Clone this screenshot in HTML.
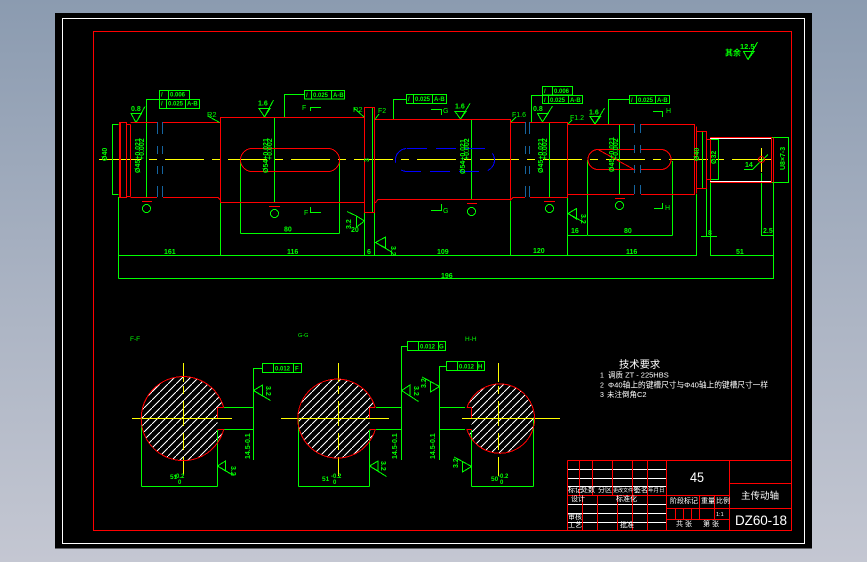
<!DOCTYPE html>
<html><head><meta charset="utf-8"><style>
html,body{margin:0;padding:0;width:867px;height:562px;overflow:hidden;background:linear-gradient(180deg,#8b9bb0 0%,#a9b2c2 50%,#c4c7d2 100%)}
svg{position:absolute;left:0;top:0}
text{font-family:"Liberation Sans","Noto Sans CJK SC",sans-serif}
.g text,text.g{fill:#00ff00;font-size:7px;font-weight:bold}
.w text{fill:#fff;font-size:7px}
</style></head><body>
<svg width="867" height="562" viewBox="0 0 867 562">
<defs>
<pattern id="h" patternUnits="userSpaceOnUse" width="8" height="8"><path d="M0 8L8 0" stroke="#fff" stroke-width="1.2" fill="none" shape-rendering="crispEdges"/></pattern>
</defs>
<rect x="55" y="13" width="757" height="535.5" fill="#000"/>
<rect x="62.5" y="18.5" width="742" height="525" fill="none" stroke="#fff"/>
<rect x="93.5" y="31.5" width="698" height="499" fill="none" stroke="#f00"/>

<!-- hatching -->
<g>
<path d="M223.7 407.5A42 42 0 1 0 223.7 429.7L217.5 429.7L217.5 407.5Z" fill="url(#h)"/>
<path d="M375.2 407.5A39.5 39.5 0 1 0 375.2 429.7L369.5 429.7L369.5 407.5Z" fill="url(#h)"/>
<path d="M467 407.5A34.7 34.7 0 1 1 467 429.7L471.5 429.7L471.5 407.5Z" fill="url(#h)"/>
</g>

<g shape-rendering="crispEdges" fill="none" stroke-width="1">
<!-- yellow centre lines -->
<g stroke="#ff0">
<path d="M99 159.5H141" />
<path d="M149 159.5H778" stroke-dasharray="8 8 39 8"/>
<path d="M183.5 363V382M183.5 386V394M183.5 401V426M183.5 433V450M183.5 457V475M132 418.5H232"/>
<path d="M338.5 363V382M338.5 386V394M338.5 401V426M338.5 433V450M338.5 457V476M281 418.5H389" />
<path d="M498.5 363V382M498.5 386V394M498.5 401V426M498.5 433V450M498.5 457V476M462 418.5H560"/>
<path d="M761.5 148V172"/>
</g>
<!-- green dimension lines -->
<g stroke="#00ff00">
<path d="M118.5 124.5H112.5V194.5H118.5"/>
<path d="M146.5 197V99.5H159.5"/>
<path d="M159.5 99V90.5H189.5V99M159.5 99.5H199.5V108.5H159.5ZM168.5 90.5V99M166.5 99.5V108.5M185.5 99.5V108.5"/>
<path d="M131 113.5H141.5L136 122.5ZM136 122.5L145 106.5"/>
<path d="M259 108.5H270L264.5 117ZM264.5 117L273.5 100"/>
<path d="M274.5 117V202"/>
<path d="M284.5 117V94.5H304.5M304.5 90.5H344.5V99H304.5ZM311.5 90.5V99M331.5 90.5V99"/>
<path d="M310.5 111V107.5H321M310.5 207V212.5H321"/>
<path d="M240.5 160V233.5M339.5 160V233.5M240.5 233.5H339.5"/>
<path d="M220.5 202V255.5M118.5 197V278.5M118.5 255.5H696.5M118.5 278.5H773.5"/>
<path d="M364.5 160V255.5M374.5 212V255.5M372.5 108V212"/>
<path d="M356.5 216V227L364.5 221ZM356.5 216L347 211.5"/>
<path d="M375.5 242.5L385.5 237V248ZM375.5 242.5L392.5 252.5"/>
<!-- middle -->
<path d="M406.5 94.5H446.5V103.5H406.5ZM413.5 94.5V103.5M432.5 94.5V103.5M393.5 119V99.5H406.5"/>
<path d="M431 109.5H441.5V115M431 210.5H441.5V204"/>
<path d="M455 111.5H466L460.5 119ZM460.5 119L470 103.5"/>
<path d="M471.5 119V199"/>
<path d="M510.5 201V255.5"/>
<path d="M542.5 86.5H572.5V95H542.5ZM552.5 86.5V95M542.5 95.5H582.5V103.5H542.5ZM548.5 95V103.5M568.5 95V103.5M531.5 122V95.5H542.5"/>
<path d="M537.5 113.5H548L542.5 122ZM542.5 122L552.5 106"/>
<path d="M549.5 122V197"/>
<path d="M568 213.5L576.5 208.5V219ZM568 213.5L584 222.5"/>
<path d="M567.5 197V255.5M567.5 235.5H587"/>
<path d="M629.5 95.5H669.5V103.5H629.5ZM636.5 95.5V103.5M655.5 95.5V103.5M608.5 124V99.5H629.5"/>
<path d="M590 116.5H600.5L595 124ZM595 124L604.5 108"/>
<path d="M653 111.5H662.5V117M654 208.5H662.5V203"/>
<path d="M619.5 124V194"/>
<path d="M587.5 160V235.5M672.5 161V235.5M587.5 235.5H672.5"/>
<path d="M696.5 194V256M710.5 182V256M710.5 255.5H773.5M773.5 182V279"/>
<path d="M706.5 188V236M701 236.5H717"/>
<path d="M702.5 131V188"/>
<path d="M710 139.5H718.5V179.5H710"/>
<path d="M771 137.5H788.5V182.5H772"/>
<path d="M768 154.5L752.5 169.5H744"/>
<path d="M761.5 173V236M761.5 235.5H773"/>
<path d="M743.5 51.5H754L748 59.5ZM748 59.5L757.5 42"/>
<!-- sections -->
<path d="M224 407.5H253.5M224 429.5H253.5M253.5 460V368.5H262.5M262.5 363.5H301.5V372.5H262.5ZM273.5 363.5V372.5M293.5 363.5V372.5"/>
<path d="M141.5 418V486.5M217.5 430V486.5M141.5 486.5H217.5"/>
<path d="M217.5 466L225.5 461V471ZM217.5 466L233.5 475.5"/>
<path d="M253.5 390.5L262.5 385V396ZM253.5 390.5L270.5 400.5"/>
<path d="M376 407.5H401.5M376 429.5H401.5M401.5 460V346.5H407.5M407.5 341.5H445.5V350.5H407.5ZM418.5 341.5V350.5M438.5 341.5V350.5"/>
<path d="M298.5 418V486.5M369.5 430V486.5M298.5 486.5H369.5"/>
<path d="M369.5 466L378 461V471ZM369.5 466L386.5 476.5"/>
<path d="M401.5 390.5L410 385V396ZM401.5 390.5L418.5 401.5"/>
<path d="M439.5 407.5H465M439.5 429.5H465M439.5 460V366.5H446.5M446.5 361.5H484.5V370.5H446.5ZM457.5 361.5V370.5M477.5 361.5V370.5"/>
<path d="M430.5 381.5L439.5 386.5L430.5 392ZM430.5 381.5L422 377"/>
<path d="M471.5 430V486.5M533.5 419V486.5M471.5 486.5H533.5"/>
<path d="M462.5 461.5L471.5 466.5L462.5 472ZM462.5 461.5L454 457"/>
</g>
<!-- circle markers -->
<g stroke="#00ff00">
<circle cx="146.5" cy="208.500" r="4"/><circle cx="274.5" cy="213.5" r="4"/><circle cx="471.5" cy="211.5" r="4"/><circle cx="549.5" cy="208.5" r="4"/><circle cx="619.5" cy="205.5" r="4"/>
</g>
<path stroke="#f00" d="M142 201.5H152M269 206.5H280M467 203.5H477M544 201.5H555M615 198.5H625"/>
<!-- blue breaks -->
<g stroke="#1565a0">
<path d="M157.5 122V134M157.5 146V154M157.5 166V174M157.5 186V197M162.5 122V134M162.5 146V154M162.5 166V174M162.5 186V197"/>
<path d="M525.5 122V134M525.5 146V154M525.5 166V174M525.5 186V197M529.5 122V134M529.5 146V154M529.5 166V174M529.5 186V197"/>
<path d="M634.5 124V133M634.5 145V153M634.5 165V173M634.5 185V194M640.5 124V133M640.5 145V153M640.5 165V173M640.5 185V194"/>
</g>
<!-- red outline -->
<g stroke="#f00">
<path d="M119.5 197.5V122.5H126.500V197.5ZM120.5 122.5V197.5M130.5 124.5V196.5M126.5 124.5H130.5M126.5 196.5H130.5"/>
<path d="M130.5 122.5H157M163 122.5H220M130.5 197.5H157M163 197.5H218L220.5 200"/>
<path d="M220.5 117.5H364.5V202.5H220.5Z"/>
<path d="M364.5 107.5H374.5V212.5H364.5Z"/>
<path d="M375 119.5H510.5V199.5H378L375 203"/>
<path d="M510.5 122.5H525M530 122.5H567.5V197.5H530M525 197.5H513L510.5 200V122"/>
<path d="M567.5 124.5H634M641 124.5H694.5V194.5H641M634 194.5H567.5"/>
<path d="M694.5 124.5V194.5M696.5 126.5V193.5M696.5 131.5H706.5V188.5H696.5"/>
<path d="M707 139.5H710.5V179.5H707M710.5 137.5V182.5"/>
<path d="M710.5 137.5H771.5V182.5H710.5M773.5 137.5V182.5"/>
<rect x="240.5" y="148.5" width="99" height="23" rx="11.5"/>
<path d="M598 149.5H634M641 149.5H661A10 10 0 0 1 661 169.5H641M634 169.5H598A10 10 0 0 1 598 149.5Z"/>
<circle cx="761.5" cy="159.5" r="3"/>
<path d="M223.7 407.5A42 42 0 1 0 223.7 429.7L217.5 429.7M217.5 407.5H223.7"/>
<path d="M217.5 407.5V418"/>
<path d="M375.2 407.5A39.5 39.5 0 1 0 375.2 429.7L369.5 429.7M369.5 407.5H375.2M369.5 407.5V418"/>
<path d="M467 407.5A34.7 34.7 0 1 1 467 429.7L471.5 429.7M471.5 407.5H467M471.5 407.5V418"/>
</g>
<rect x="395.5" y="148.5" width="99" height="23" rx="11.5" stroke="#0000ff" stroke-dasharray="20 9"/>
<path stroke="#fff" d="M710 138.5H771M710 181.5H771"/>
<!-- leaders -->
<path stroke="#00ff00" d="M208 116L219.5 122.5M354 108L364 117M375 119.5L379 114M511 122L516 117M568 124L572 120"/>
<!-- title block -->
<path stroke="#fff" d="M567.5 469.5H666M567.5 478.5H666M567.5 486.5H666M567.5 504.5H666M567.5 513.5H666M567.5 522.5H666"/>
<path stroke="#f00" d="M567.5 460.5H791.5M567.5 460.5V530M567.5 495.5H729.5M579.5 460.5V495M592.5 460.5V495M612.5 460.5V495M632.5 460.5V530M647.5 460.5V530M666.5 460.5V530M582.5 495V530M597.5 495V530M617.5 495V530M729.5 460.5V530M729.5 483.5H791.5M666.5 508.5H791.5M666.5 519.5H729.5M699.5 495V519M714.5 495V519M675.5 508.5V519M683.5 508.5V519M691.5 508.5V519"/>
</g>

<!-- green text -->
<g class="g">
<text x="131" y="111">0.8</text>
<text x="258" y="105.500">1.6</text>
<text x="455" y="108.500">1.6</text>
<text x="533" y="111">0.8</text>
<text x="589" y="114.500">1.6</text>
<text x="740" y="49" style="font-size:7.500px">12.5</text>
<text x="725" y="55.500" style="font-size:8px">其余</text>
<text x="207" y="117" style="font-size:7.500px;font-weight:normal">R2</text>
<text x="353" y="112" style="font-size:7.500px;font-weight:normal">R2</text>
<text x="378" y="113" style="font-weight:normal">F2</text>
<text x="512" y="117" style="font-weight:normal">F1.6</text>
<text x="570" y="120" style="font-weight:normal">F1.2</text>
<text x="302" y="110" style="font-weight:normal">F</text>
<text x="304" y="215" style="font-weight:normal">F</text>
<text x="443" y="113" style="font-weight:normal">G</text>
<text x="443" y="213" style="font-weight:normal">G</text>
<text x="666" y="113" style="font-weight:normal">H</text>
<text x="665" y="210" style="font-weight:normal">H</text>
<text x="130" y="341" style="font-size:6.500px;font-weight:normal">F-F</text>
<text x="298" y="337" style="font-size:5.500px;font-weight:normal">G-G</text>
<text x="465" y="341" style="font-size:6.500px;font-weight:normal">H-H</text>
<text x="164" y="254">161</text><text x="287" y="254">116</text><text x="367" y="254">6</text>
<text x="437" y="254">109</text><text x="533" y="253">120</text><text x="626" y="254">116</text><text x="736" y="254">51</text>
<text x="441" y="278">196</text>
<text x="284" y="231.500">80</text><text x="624" y="233">80</text><text x="351" y="232">20</text><text x="571" y="233">16</text>
<text x="708" y="235">8</text><text x="763" y="233">2.5</text><text x="745" y="167">14</text>
<text x="170" y="96.500" style="font-size:6px">0.006</text><text x="168" y="105.500" style="font-size:6px">0.025</text><text x="187" y="105.500" style="font-size:6px">A-B</text>
<text x="161" y="96.500" style="font-size:6px">/</text><text x="161" y="105.500" style="font-size:6px">/</text>
<text x="313" y="97" style="font-size:6px">0.025</text><text x="333" y="97" style="font-size:6px">A-B</text><text x="306" y="97" style="font-size:6px">/</text>
<text x="415" y="101" style="font-size:6px">0.025</text><text x="434" y="101" style="font-size:6px">A-B</text><text x="408" y="101" style="font-size:6px">/</text>
<text x="554" y="93" style="font-size:6px">0.006</text><text x="550" y="102" style="font-size:6px">0.025</text><text x="570" y="102" style="font-size:6px">A-B</text><text x="544" y="93" style="font-size:6px">/</text><text x="544" y="102" style="font-size:6px">/</text>
<text x="638" y="102" style="font-size:6px">0.025</text><text x="657" y="102" style="font-size:6px">A-B</text><text x="631" y="102" style="font-size:6px">/</text>
<text x="275" y="370.500" style="font-size:6px">0.012</text><text x="295" y="370.500" style="font-size:6px">F</text>
<text x="420" y="348.500" style="font-size:6px">0.012</text><text x="439" y="348.500" style="font-size:6px">G</text>
<text x="459" y="368.500" style="font-size:6px">0.012</text><text x="478" y="368.500" style="font-size:6px">H</text>
<text x="170" y="479" style="font-size:6.500px">51</text><text x="174" y="478" style="font-size:6px">-0.2</text><text x="178" y="484" style="font-size:6px">0</text>
<text x="322" y="481" style="font-size:6.500px">51</text><text x="331" y="478" style="font-size:6px">-0.2</text><text x="333" y="484" style="font-size:6px">0</text>
<text x="491" y="481" style="font-size:6.500px">50</text><text x="498" y="478" style="font-size:6px">-0.2</text><text x="500" y="484" style="font-size:6px">0</text>
<g style="font-size:5.500px">
<text transform="translate(107,161) rotate(-90)">Ø40</text>
<text transform="translate(140,173) rotate(-90)">Ø45+0.021</text>
<text transform="translate(144,160) rotate(-90)">+0.002</text>
<text transform="translate(268,173) rotate(-90)">Ø54+0.021</text>
<text transform="translate(272,160) rotate(-90)">+0.002</text>
<text transform="translate(369,162) rotate(-90)">3</text>
<text transform="translate(465,174) rotate(-90)">Ø54+0.021</text>
<text transform="translate(469,160) rotate(-90)">+0.002</text>
<text transform="translate(543,173) rotate(-90)">Ø45+0.021</text>
<text transform="translate(547,160) rotate(-90)">+0.002</text>
<text transform="translate(614,172) rotate(-90)">Ø45+0.021</text>
<text transform="translate(618,160) rotate(-90)">+0.002</text>
<text transform="translate(699,161) rotate(-90)">Ø40</text>
<text transform="translate(716,164) rotate(-90)">Ø32</text>
<text transform="translate(785,170) rotate(-90)">U8×7-3</text>
<text transform="translate(351,229) rotate(-90)">3.2</text>
<text transform="translate(391,246) rotate(90)">3.2</text>
<text transform="translate(581,214) rotate(90)">3.2</text>
<text transform="translate(231,466) rotate(90)">3.2</text>
<text transform="translate(266,386) rotate(90)">3.2</text>
<text transform="translate(381,461) rotate(90)">3.2</text>
<text transform="translate(414,386) rotate(90)">3.2</text>
<text transform="translate(426,388) rotate(-90)">3.2</text>
<text transform="translate(458,468) rotate(-90)">3.2</text>
<text transform="translate(250,459) rotate(-90)">14.5-0.1</text>
<text transform="translate(397,459) rotate(-90)">14.5-0.1</text>
<text transform="translate(435,459) rotate(-90)">14.5-0.1</text>
</g>
</g>

<!-- white text -->
<g class="w">
<text x="619" y="368" style="font-size:10.300px">技术要求</text>
<text x="600" y="377.500">1</text><text x="608" y="377.500" style="font-size:7.500px">调质 ZT - 225HBS</text>
<text x="600" y="387.500">2</text><text x="608" y="387.500" style="font-size:7.700px">Φ40轴上的键槽尺寸与Φ40轴上的键槽尺寸一样</text>
<text x="600" y="397">3</text><text x="607" y="397" style="font-size:7.500px">未注倒角C2</text>
<text x="690" y="482" style="font-size:14px" textLength="14" lengthAdjust="spacingAndGlyphs">45</text>
<text x="741" y="499" style="font-size:9.500px">主传动轴</text>
<text x="735" y="525" style="font-size:13.500px" textLength="52" lengthAdjust="spacing">DZ60-18</text>
<g style="font-size:6.500px">
<text x="568" y="492">标记</text><text x="581" y="492">处数</text><text x="598" y="492">分区</text><text x="613" y="492" style="font-size:5px">更改文件号</text><text x="634" y="492">签名</text><text x="648" y="492" style="font-size:5.500px">年月日</text>
<text x="571" y="501">设计</text><text x="616" y="501">标准化</text>
<text x="670" y="503">阶段标记</text><text x="701" y="503">重量</text><text x="716" y="503">比例</text>
<text x="568" y="519">审核</text><text x="568" y="527">工艺</text><text x="620" y="527">批准</text>
<text x="676" y="526">共 张</text><text x="703" y="526">第 张</text>
<text x="716" y="516" style="font-size:5.500px">1:1</text>
</g>
</g>
</svg>
</body></html>
